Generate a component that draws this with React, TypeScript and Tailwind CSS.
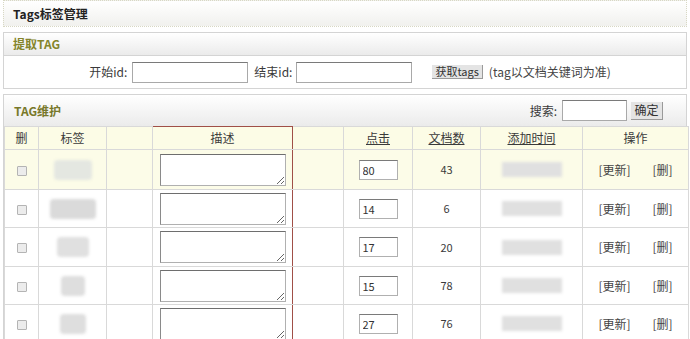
import React from 'react';

interface TagRow {
    clicks: string;
    docs: string;
    tagW: number;
    tagTone: string;
    highlight?: boolean;
}

const rows: TagRow[] = [
    { clicks: '80', docs: '43', tagW: 38, tagTone: 'bg-[#e4e7e1]', highlight: true },
    { clicks: '14', docs: '6', tagW: 46, tagTone: 'bg-[#dadada]' },
    { clicks: '17', docs: '20', tagW: 32, tagTone: 'bg-[#e0e0e0]' },
    { clicks: '15', docs: '78', tagW: 24, tagTone: 'bg-[#dedede]' },
    { clicks: '27', docs: '76', tagW: 26, tagTone: 'bg-[#dedede]' },
];

const rowHeights = ['h-[40px]', 'h-[38px]', 'h-[39px]', 'h-[38px]', 'h-[38px]'];

const cell = 'border border-[#d9d9d9] text-center align-middle p-0';
const redCell = 'border-x border-x-[#a04f47] border-y border-y-[#d9d9d9] text-center align-middle p-0';

export default function App() {
    return (
        <div className="w-[690px] h-[339px] overflow-hidden bg-white text-[12px] text-[#3a3a3a] font-['Noto_Sans_CJK_SC','Liberation_Sans',sans-serif] leading-none">

            {/* Title */}
            <div className="mx-[3px] h-[27px] border border-dotted border-[#d8d8c4] bg-gradient-to-b from-white to-[#f1f1ee] flex items-center pl-[9px]">
                <span className="font-bold text-[#222] text-[12px]">Tags标签管理</span>
            </div>

            {/* Fetch tags */}
            <div className="mx-[3px] mt-[5px] border border-[#d4d4d4]">
                <div className="h-[23px] bg-gradient-to-b from-white to-[#ebebeb] border-b border-[#d4d4d4] flex items-center pl-[9px]">
                    <span className="font-bold text-[#85852c]">提取TAG</span>
                </div>
                <div className="h-[32px] flex items-center justify-center pl-[10px]">
                    <span>开始id:</span>
                    <input className="ml-[5px] w-[116px] h-[21px] border border-[#a9a9a9] border-t-[#7a7a7a] bg-white" />
                    <span className="ml-[6px]">结束id:</span>
                    <input className="ml-[4px] w-[116px] h-[21px] border border-[#a9a9a9] border-t-[#7a7a7a] bg-white" />
                    <button className="ml-[20px] h-[14px] px-[3px] text-[11px] bg-[#e4e4e4] border-r border-b border-[#9a9a9a] text-[#333] flex items-center">获取tags</button>
                    <span className="ml-[6px] text-[#444]">(tag以文档关键词为准)</span>
                </div>
            </div>

            {/* Tag maintenance */}
            <div className="mx-[3px] mt-[5px] border border-[#d4d4d4] border-b-0">
                <div className="h-[31px] bg-gradient-to-b from-white to-[#ebebeb] flex items-center pl-[10px] pr-[23px]">
                    <span className="font-bold text-[#78782a]">TAG维护</span>
                    <span className="ml-auto">搜索:</span>
                    <input className="ml-[5px] w-[65px] h-[21px] border border-[#a9a9a9] border-t-[#7a7a7a] bg-white" />
                    <button className="ml-[4px] w-[32px] h-[18px] bg-[#e4e4e4] border-r border-b border-[#9a9a9a] text-[#333]">确定</button>
                </div>

                <table className="w-[684px] table-fixed border-collapse">
                    <colgroup>
                        <col className="w-[34px]" />
                        <col className="w-[68px]" />
                        <col className="w-[46px]" />
                        <col className="w-[140px]" />
                        <col className="w-[51px]" />
                        <col className="w-[69px]" />
                        <col className="w-[68px]" />
                        <col className="w-[102px]" />
                        <col className="w-[106px]" />
                    </colgroup>
                    <thead>
                        <tr className="h-[23px] bg-[#fcfce6]">
                            <th className={`${cell} font-normal`}>删</th>
                            <th className={`${cell} font-normal`}>标签</th>
                            <th className={`${cell} font-normal`}></th>
                            <th className={`${redCell} border-t-[#a04f47] font-normal`}>描述</th>
                            <th className={`${cell} font-normal`}></th>
                            <th className={`${cell} font-normal underline`}>点击</th>
                            <th className={`${cell} font-normal underline`}>文档数</th>
                            <th className={`${cell} font-normal underline`}>添加时间</th>
                            <th className={`${cell} font-normal`}>操作</th>
                        </tr>
                    </thead>
                    <tbody>
                        {rows.map((r, i) => (
                            <tr key={i} className={`${rowHeights[i]} ${r.highlight ? 'bg-[#fcfce8]' : 'bg-white'}`}>
                                <td className={cell}>
                                    <span className="inline-block w-[10px] h-[10px] border border-[#b4b4b4] bg-[#ececec] rounded-[1px] align-middle" />
                                </td>
                                <td className={cell}>
                                    <div className="flex justify-center">
                                        <div className={`h-[20px] ${r.tagTone} blur-[1.5px] rounded-[4px]`} style={{ width: r.tagW }} />
                                    </div>
                                </td>
                                <td className={cell}></td>
                                <td className={redCell}>
                                    <textarea className="block mx-auto w-[126px] h-[32px] border border-[#b0b0b0] border-t-[#6e6e6e] border-l-[#8a8a8a] bg-white" />
                                </td>
                                <td className={cell}></td>
                                <td className={cell}>
                                    <input
                                        defaultValue={r.clicks}
                                        className="block mx-auto w-[39px] h-[20px] border border-[#b0b0b0] border-t-[#7a7a7a] bg-white text-[11px] pl-[3px] text-[#333]"
                                    />
                                </td>
                                <td className={`${cell} text-[11px]`}>{r.docs}</td>
                                <td className={cell}>
                                    <div className="flex justify-center">
                                        <div className="w-[60px] h-[15px] bg-[#e0e0e0] blur-[1.5px]" />
                                    </div>
                                </td>
                                <td className={cell}>
                                    <div className="flex justify-center gap-[22px] text-[#444]">
                                        <span>[更新]</span>
                                        <span>[删]</span>
                                    </div>
                                </td>
                            </tr>
                        ))}
                    </tbody>
                </table>
            </div>
        </div>
    );
}
